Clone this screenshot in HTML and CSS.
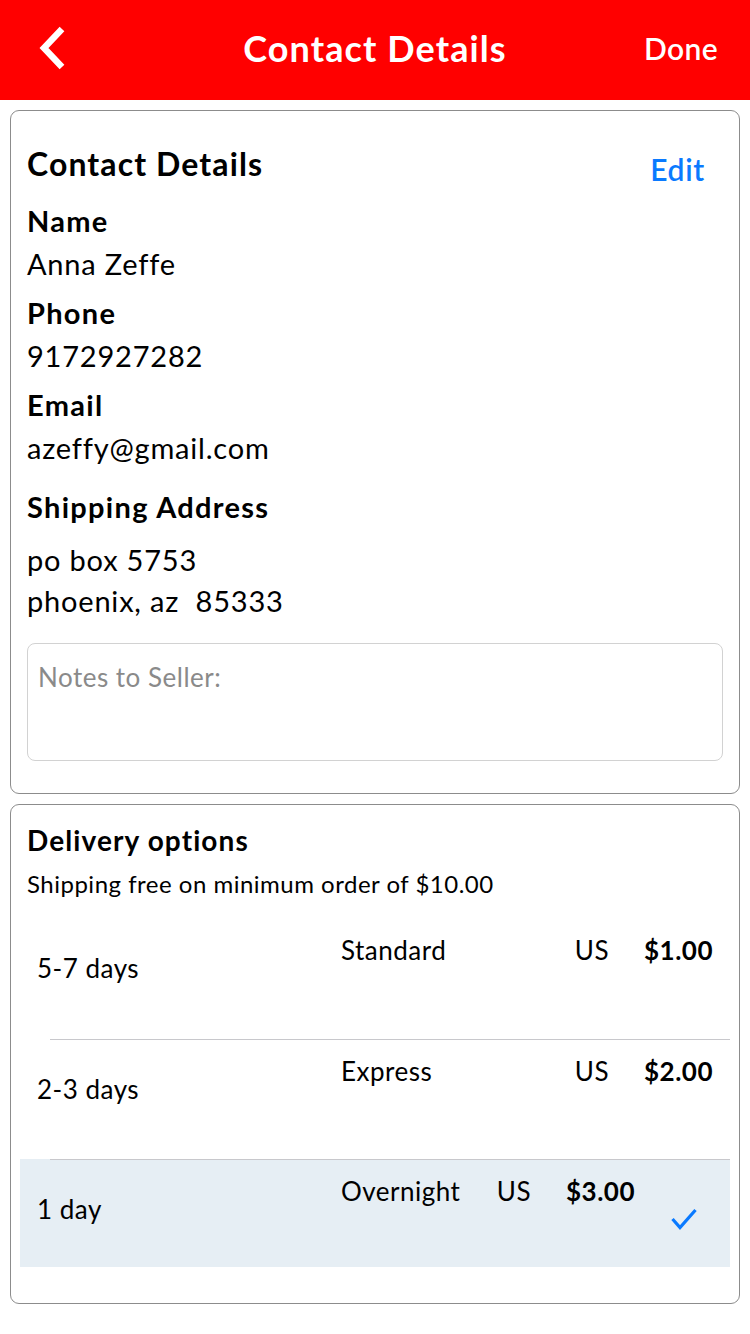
FILE: index.html
```html
<!DOCTYPE html>
<html>
<head>
<meta charset="utf-8">
<link rel="stylesheet" href="styles.css">
</head>
<body>
<header class="navbar">
  <span class="nav-back">
    <svg width="30" height="44" viewBox="0 0 30 44"><polyline points="24,3 6,22 24,41" fill="none" stroke="#fff" stroke-width="6.5" stroke-linecap="butt" stroke-linejoin="miter"/></svg>
  </span>
  <h1 class="nav-title">Contact Details</h1>
  <span class="nav-done">Done</span>
</header>

<section class="card contact">
  <div class="card-head">
    <h2 class="card-title">Contact Details</h2>
    <span class="edit">Edit</span>
  </div>
  <div class="label first">Name</div>
  <div class="value">Anna Zeffe</div>
  <div class="label">Phone</div>
  <div class="value">9172927282</div>
  <div class="label">Email</div>
  <div class="value">azeffy@gmail.com</div>
  <div class="label ship">Shipping Address</div>
  <div class="address">
    <div>po box 5753</div>
    <div>phoenix, az&nbsp; 85333</div>
  </div>
  <div class="notes">Notes to Seller:</div>
</section>

<section class="card delivery">
  <h2 class="del-title">Delivery options</h2>
  <p class="del-note">Shipping free on minimum order of $10.00</p>
  <ul class="options">
    <li class="option">
      <span class="days">5-7 days</span>
      <span class="type">Standard</span>
      <span class="region">US</span>
      <span class="price">$1.00</span>
    </li>
    <li class="option">
      <span class="days">2-3 days</span>
      <span class="type">Express</span>
      <span class="region">US</span>
      <span class="price">$2.00</span>
    </li>
    <li class="option selected">
      <span class="days">1 day</span>
      <span class="type">Overnight</span>
      <span class="region">US</span>
      <span class="price">$3.00</span>
      <span class="check">
        <svg width="26" height="22" viewBox="0 0 26 22"><polyline points="1.5,11 9,19.5 24.5,2" fill="none" stroke="#0a7aff" stroke-width="3.2"/></svg>
      </span>
    </li>
  </ul>
</section>
</body>
</html>
```

FILE: styles.css
```css
* { box-sizing: border-box; }
html, body { margin: 0; padding: 0; }
body {
  width: 750px;
  height: 1334px;
  background: #fff;
  font-family: "Lato", "Open Sans", sans-serif;
  color: #000;
  overflow: hidden;
}
h1, h2, p, ul { margin: 0; padding: 0; }
ul { list-style: none; }

.navbar {
  height: 100px;
  background: #ff0000;
  color: #fff;
  display: flex;
  align-items: center;
  padding: 0 32px 0 38px;
}
.nav-back { display: flex; width: 100px; margin-top: -4px; }
.nav-title {
  flex: 1;
  text-align: center;
  font-size: 36px;
  font-weight: 700;
  letter-spacing: 1.1px;
  margin-top: -4px;
  padding-right: 6px;
}
.nav-done {
  width: 100px;
  text-align: right;
  font-size: 30px;
  font-weight: 600;
  letter-spacing: 0.4px;
  margin-top: -4px;
}

.card {
  margin: 10px 10px 0;
  border: 1px solid #8c8c8c;
  border-radius: 9px;
}
.contact { padding: 33px 16px 0; height: 684px; }
.card-head {
  display: flex;
  justify-content: space-between;
  align-items: flex-start;
}
.card-title { font-size: 32px; font-weight: 700; line-height: 40px; letter-spacing: 1.1px; }
.edit {
  color: #0a7aff;
  font-size: 30px;
  font-weight: 600;
  letter-spacing: 0.7px;
  line-height: 40px;
  margin-top: 5px;
  margin-right: 18px;
}
.label { font-size: 29px; font-weight: 700; line-height: 44px; margin-top: 6px; letter-spacing: 1.3px; }
.label.first { margin-top: 10px; }
.label.ship { margin-top: 16px; }
.value { font-size: 29px; line-height: 42px; letter-spacing: 0.8px; }
.address { font-size: 29px; line-height: 41px; margin-top: 10px; letter-spacing: 0.8px; }
.notes {
  margin-top: 22px;
  height: 118px;
  border: 1px solid #d2d2d2;
  border-radius: 8px;
  padding: 16px 10px;
  color: #8a8a8a;
  font-size: 26px;
  letter-spacing: 0.5px;
  line-height: 34px;
}

.delivery { padding: 15px 9px 0; height: 500px; }
.del-title {
  font-size: 28px;
  font-weight: 700;
  letter-spacing: 1.1px;
  line-height: 40px;
  padding-left: 7px;
}
.del-note {
  font-size: 24px;
  letter-spacing: 0.5px;
  line-height: 32px;
  margin-top: 8px;
  padding-left: 7px;
}
.options { margin-top: 19px; }
.option {
  display: flex;
  align-items: flex-start;
  height: 120px;
  padding: 14px 17px 0 17px;
  font-size: 26px;
  letter-spacing: 0.5px;
  line-height: 34px;
  position: relative;
}
.option + .option { border-top: 1px solid transparent; }
.option + .option::before {
  content: "";
  position: absolute;
  top: -1px;
  left: 30px;
  right: 0;
  height: 1px;
  background: #c8c8cc;
}
.days { width: 304px; margin-top: 18px; }
.type { flex: 1; }
.region { margin-right: 35px; }
.price { font-weight: 700; }
.selected { background: #e6eef4; height: 108px; }
.check { width: 78px; padding-left: 36px; margin-top: 34px; display: flex; }
```
